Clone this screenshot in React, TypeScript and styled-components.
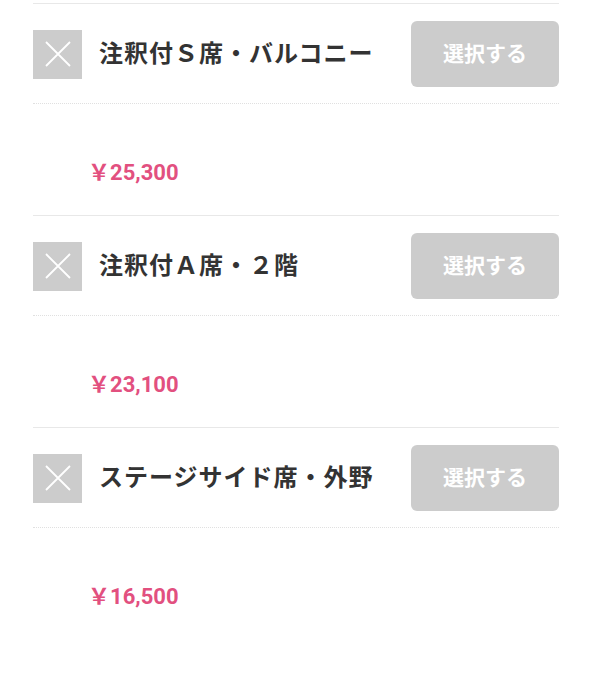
import styled, { createGlobalStyle } from "styled-components"

const GlobalStyle = createGlobalStyle`
  body {
    margin: 0;
    background: #fff;
    font-family: Roboto, "Noto Sans CJK JP", sans-serif;
  }
`

type Seat = {
  name: string
  price: string
}

const seats: Seat[] = [
  { name: "注釈付Ｓ席・バルコニー", price: "25,300" },
  { name: "注釈付Ａ席・２階", price: "23,100" },
  { name: "ステージサイド席・外野", price: "16,500" },
]

const List = styled.div`
  width: 526px;
  margin: 0 auto;
  padding-top: 3px;
`

const Section = styled.section`
  border-top: 1px solid #e8e8e8;
`

const Header = styled.div`
  display: flex;
  align-items: center;
  padding: 17px 0 16px;
  border-bottom: 1px dotted #e0e0e0;
`

const CloseBox = styled.div`
  width: 49px;
  height: 49px;
  flex: none;
  background: #cccccc;
  display: flex;
  align-items: center;
  justify-content: center;
`

const Title = styled.h3`
  flex: 1;
  margin: 0 0 0 17px;
  padding-bottom: 5px;
  font-family: "Noto Sans CJK JP", sans-serif;
  font-size: 24px;
  letter-spacing: 1px;
  font-weight: 700;
  color: #333;
  white-space: nowrap;
`

const SelectButton = styled.button`
  width: 148px;
  height: 66px;
  flex: none;
  border: none;
  border-radius: 6px;
  background: #cccccc;
  color: #fff;
  font-family: "Noto Sans CJK JP", sans-serif;
  font-size: 21px;
  font-weight: 700;
  padding: 0 0 5px;
`

const PriceRow = styled.div`
  padding: 57px 0 30px 55px;
`

const Price = styled.span`
  font-family: Roboto, "Noto Sans CJK JP", sans-serif;
  font-size: 22px;
  line-height: 24px;
  font-weight: 700;
  color: #e2507f;
`

const Cross = () => (
  <svg width="26" height="26" viewBox="0 0 26 26">
    <path d="M1 1 L25 25 M25 1 L1 25" stroke="#fff" strokeWidth="1.8" />
  </svg>
)

export default function App() {
  return (
    <>
      <GlobalStyle />
      <List>
        {seats.map((s) => (
          <Section key={s.name}>
            <Header>
              <CloseBox>
                <Cross />
              </CloseBox>
              <Title>{s.name}</Title>
              <SelectButton>選択する</SelectButton>
            </Header>
            <PriceRow>
              <Price>￥{s.price}</Price>
            </PriceRow>
          </Section>
        ))}
      </List>
    </>
  )
}
